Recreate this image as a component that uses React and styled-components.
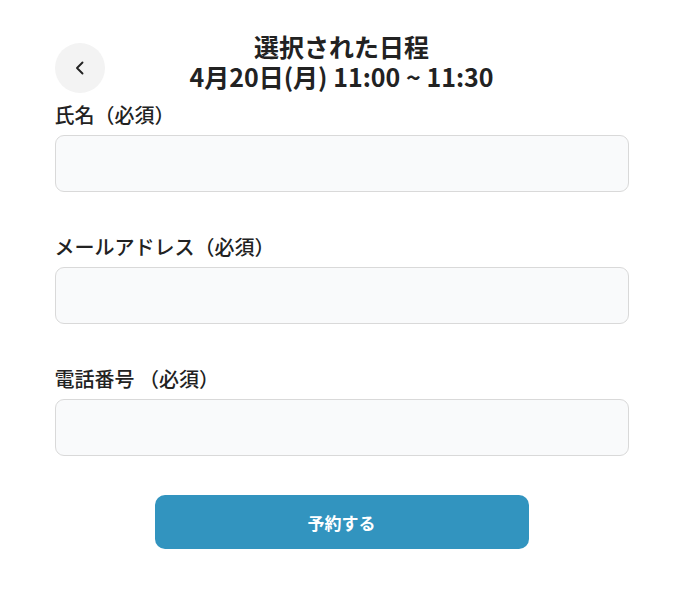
import React from "react";
import styled, { createGlobalStyle } from "styled-components";

const GlobalStyle = createGlobalStyle`
  body {
    margin: 0;
    background: #fff;
    font-family: "Noto Sans CJK JP", "Noto Sans", sans-serif;
    color: #222;
  }
`;

const Page = styled.div`
  width: 574px;
  margin: 0 auto;
  padding-top: 31px;
  display: flex;
  flex-direction: column;
`;

const Header = styled.header`
  display: grid;
  grid-template-columns: 50px 1fr 50px;
  align-items: end;
`;

const BackButton = styled.button`
  width: 50px;
  height: 50px;
  border-radius: 50%;
  border: 0;
  background: #f3f3f3;
  display: flex;
  align-items: center;
  justify-content: center;
  padding: 0;
  margin-bottom: -2px;
  color: #222;
  cursor: pointer;
`;

const Title = styled.h1`
  margin: 0;
  text-align: center;
  font-size: 25px;
  line-height: 30px;
  font-weight: 700;
`;

const TitleLine = styled.span`
  display: block;
`;

const Form = styled.form`
  display: flex;
  flex-direction: column;
  gap: 41px;
  margin-top: 10px;
`;

const Field = styled.label`
  display: flex;
  flex-direction: column;
  gap: 6px;
`;

const LabelText = styled.span`
  font-size: 20px;
  line-height: 28px;
  font-weight: 500;
`;

const Input = styled.input`
  box-sizing: border-box;
  height: 57px;
  width: 100%;
  border: 1px solid #d9d9d9;
  border-radius: 9px;
  background: #f9fafb;
  padding: 0 14px;
  font-size: 16px;
  font-family: inherit;
  outline: none;
`;

const Submit = styled.button`
  align-self: center;
  width: 374px;
  height: 54px;
  margin-top: -2px;
  border: 0;
  border-radius: 10px;
  background: #3294bf;
  color: #fff;
  font-family: inherit;
  font-size: 17px;
  font-weight: 700;
  cursor: pointer;
`;

function Chevron() {
  return (
    <svg width="14" height="16" viewBox="0 0 14 16" fill="none">
      <path d="M9.5 2.5 4 8l5.5 5.5" stroke="currentColor" strokeWidth="1.9" strokeLinecap="round" strokeLinejoin="round" />
    </svg>
  );
}

const fields = [
  { label: "氏名（必須）", type: "text" },
  { label: "メールアドレス（必須）", type: "email" },
  { label: "電話番号 （必須）", type: "tel" },
];

export default function App() {
  return (
    <>
      <GlobalStyle />
      <Page>
        <Header>
          <BackButton aria-label="戻る">
            <Chevron />
          </BackButton>
          <Title>
            <TitleLine>選択された日程</TitleLine>
            <TitleLine>4月20日(月) 11:00 ~ 11:30</TitleLine>
          </Title>
          <span />
        </Header>
        <Form onSubmit={(e) => e.preventDefault()}>
          {fields.map((f) => (
            <Field key={f.label}>
              <LabelText>{f.label}</LabelText>
              <Input type={f.type} />
            </Field>
          ))}
          <Submit type="submit">予約する</Submit>
        </Form>
      </Page>
    </>
  );
}
